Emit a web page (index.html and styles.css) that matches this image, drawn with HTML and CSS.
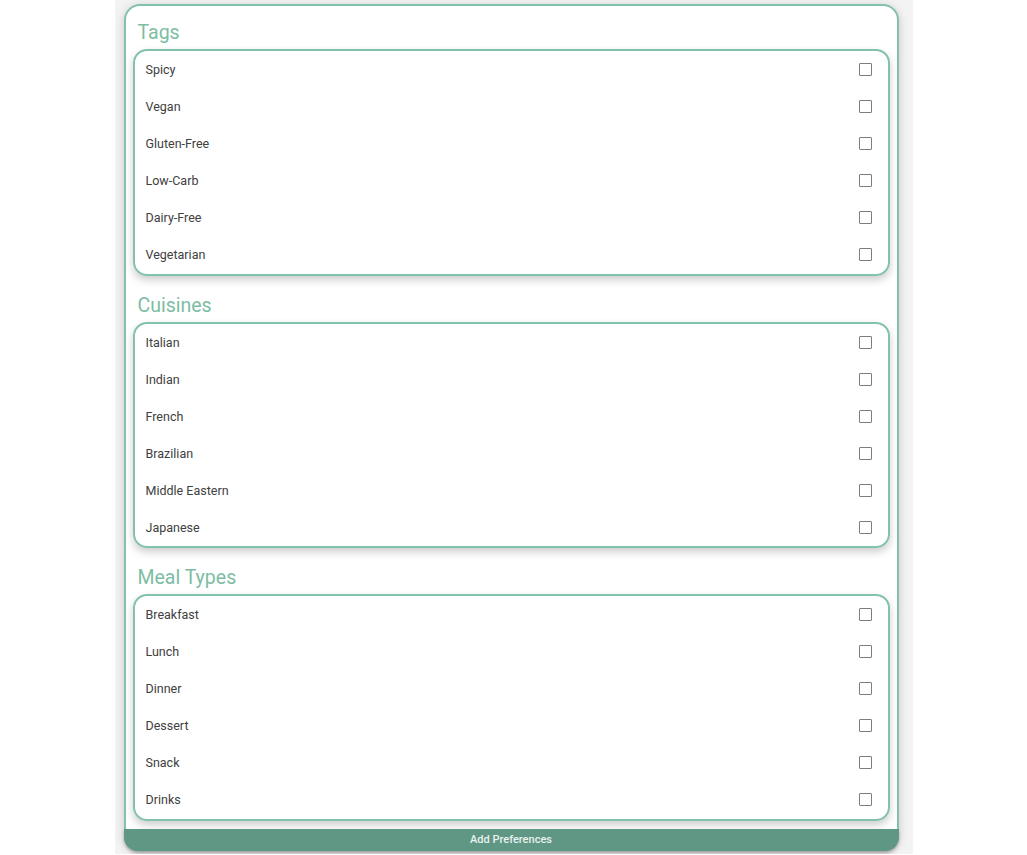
FILE: index.html
```html
<!DOCTYPE html>
<html lang="en">

<head>
    <meta charset="UTF-8">
    <meta name="viewport" content="width=device-width, initial-scale=1.0">
    <title>Preferences</title>
    <link rel="stylesheet" href="styles.css">
</head>

<body>
    <div class="page">
        <div class="card">
            <div class="section">
                <h2>Tags</h2>
                <div class="options">
                    <label class="option"><span>Spicy</span><input type="checkbox"></label>
                    <label class="option"><span>Vegan</span><input type="checkbox"></label>
                    <label class="option"><span>Gluten-Free</span><input type="checkbox"></label>
                    <label class="option"><span>Low-Carb</span><input type="checkbox"></label>
                    <label class="option"><span>Dairy-Free</span><input type="checkbox"></label>
                    <label class="option"><span>Vegetarian</span><input type="checkbox"></label>
                </div>
            </div>
            <div class="section">
                <h2>Cuisines</h2>
                <div class="options">
                    <label class="option"><span>Italian</span><input type="checkbox"></label>
                    <label class="option"><span>Indian</span><input type="checkbox"></label>
                    <label class="option"><span>French</span><input type="checkbox"></label>
                    <label class="option"><span>Brazilian</span><input type="checkbox"></label>
                    <label class="option"><span>Middle Eastern</span><input type="checkbox"></label>
                    <label class="option"><span>Japanese</span><input type="checkbox"></label>
                </div>
            </div>
            <div class="section">
                <h2>Meal Types</h2>
                <div class="options">
                    <label class="option"><span>Breakfast</span><input type="checkbox"></label>
                    <label class="option"><span>Lunch</span><input type="checkbox"></label>
                    <label class="option"><span>Dinner</span><input type="checkbox"></label>
                    <label class="option"><span>Dessert</span><input type="checkbox"></label>
                    <label class="option"><span>Snack</span><input type="checkbox"></label>
                    <label class="option"><span>Drinks</span><input type="checkbox"></label>
                </div>
            </div>
            <button class="submit">Add Preferences</button>
        </div>
    </div>
</body>

</html>
```

FILE: styles.css
```css
body {
    font-family: Roboto, 'Noto Sans', sans-serif;
    background-color: #fff;
    color: #333;
    margin: 0;
}

.page {
    width: 798px;
    margin: 0 auto;
    background-color: #f3f3f3;
    padding: 4px 0 3px;
}

.card {
    width: 775px;
    box-sizing: border-box;
    margin-left: 9px;
    background-color: #fff;
    border: 2px solid #82c2a9;
    border-radius: 16px;
    padding: 0 7px;
    box-shadow: 0 2px 10px rgba(0, 0, 0, 0.18);
}

.section h2 {
    font-size: 19.5px;
    font-weight: 400;
    line-height: 24px;
    color: #7dbda3;
    margin: 15px 0 4px 5px;
}

.section + .section h2 {
    margin-top: 18px;
}

.options {
    border: 2px solid #82c2a9;
    border-radius: 14px;
    box-shadow: 0 4px 8px rgba(0, 0, 0, 0.2);
    padding: 0 0 0.5px;
    margin-bottom: 4px;
}

.option {
    display: flex;
    align-items: center;
    justify-content: space-between;
    height: 37px;
    padding: 0 16px 0 11px;
    font-size: 12.5px;
    color: #404040;
}

/* plain square box, like the old-style checkbox */
.option input {
    appearance: none;
    -webkit-appearance: none;
    box-sizing: border-box;
    width: 13px;
    height: 13px;
    margin: 0;
    border: 1.5px solid #7d7d7d;
    border-radius: 1px;
    background-color: #fff;
}

.submit {
    display: block;
    width: calc(100% + 18px);
    margin: 8px -9px -2px;
    height: 22px;
    border: none;
    border-radius: 0 0 14px 14px;
    background-color: #5f9684;
    color: #e9f2ee;
    font-family: Roboto, sans-serif;
    font-size: 11px;
    font-weight: 500;
    cursor: pointer;
    box-shadow: 0 2px 3px rgba(0, 0, 0, 0.25);
}
```
